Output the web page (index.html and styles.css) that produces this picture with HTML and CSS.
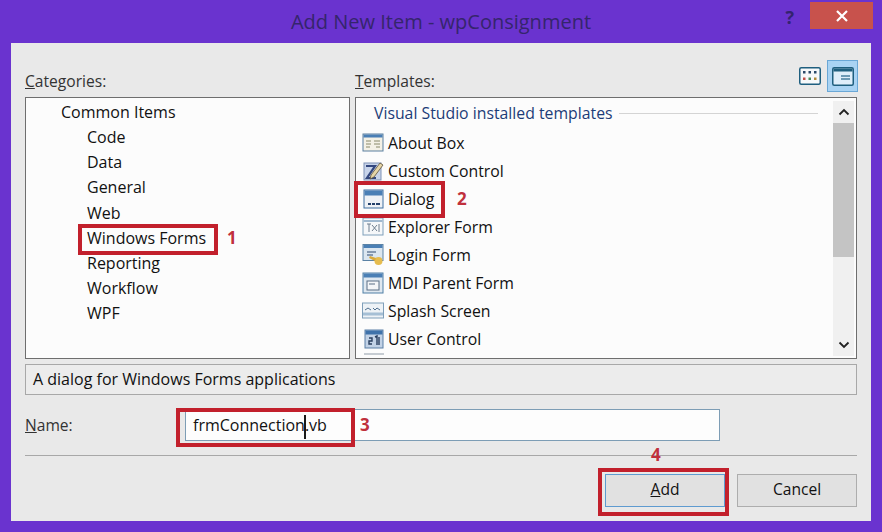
FILE: index.html
```html
<!DOCTYPE html>
<html lang="en">
<head>
    <meta charset="UTF-8">
    <title>Add New Item - wpConsignment</title>
    <link rel="stylesheet" href="styles.css">
</head>
<body>
    <div class="janela">
        <div class="barra-titulo">
            <span class="titulo">Add New Item - wpConsignment</span>
            <span class="ajuda">?</span>
            <span class="fechar">
                <svg width="14" height="14" viewBox="0 0 14 14"><path d="M2 2l10 10M12 2L2 12" stroke="#fff" stroke-width="2.2" fill="none"/></svg>
            </span>
        </div>
        <div class="painel">
            <div class="colunas cabecalho">
                <label class="rotulo"><u>C</u>ategories:</label>
                <div class="cabecalho-templates">
                    <label class="rotulo"><u>T</u>emplates:</label>
                    <div class="visoes">
                        <span class="visao">
                            <svg width="22" height="18" viewBox="0 0 22 18">
                                <rect x="0.75" y="0.75" width="20.5" height="16.5" rx="1.5" fill="#f7f9fa" stroke="#1f5f7f" stroke-width="1.5"/>
                                <rect x="4" y="4" width="2.5" height="2.5" fill="#2b4a6a"/><rect x="9.5" y="4" width="2.5" height="2.5" fill="#2b4a6a"/><rect x="15" y="4" width="2.5" height="2.5" fill="#2b4a6a"/>
                                <rect x="4" y="10.5" width="2.5" height="2.5" fill="#c0504a"/><rect x="9.5" y="10.5" width="2.5" height="2.5" fill="#4a8a5a"/><rect x="15" y="10.5" width="2.5" height="2.5" fill="#b08a3a"/>
                            </svg>
                        </span>
                        <span class="visao ativa">
                            <svg width="22" height="19" viewBox="0 0 22 19">
                                <rect x="0.75" y="0.75" width="20.5" height="17.5" rx="1.5" fill="#dfeefa" stroke="#1f5f7f" stroke-width="1.5"/>
                                <rect x="1.5" y="1.5" width="19" height="3" fill="#1f5f7f"/>
                                <path d="M9 9h9M9 12h9" stroke="#4a7f9f" stroke-width="1.5"/>
                            </svg>
                        </span>
                    </div>
                </div>
            </div>

            <div class="colunas">
                <div class="caixa categorias">
                    <div class="categoria-raiz">Common Items</div>
                    <div class="categoria">Code</div>
                    <div class="categoria">Data</div>
                    <div class="categoria">General</div>
                    <div class="categoria">Web</div>
                    <div class="categoria">Windows Forms</div>
                    <div class="categoria">Reporting</div>
                    <div class="categoria">Workflow</div>
                    <div class="categoria">WPF</div>
                </div>
                <div class="caixa templates">
                    <div class="lista">
                        <div class="grupo"><span>Visual Studio installed templates</span><i></i></div>
                        <div class="item">
                            <svg class="icone" width="22" height="20" viewBox="0 0 22 20">
                                <rect x="1" y="1" width="20" height="17" fill="#f4f1e6" stroke="#5a7f9f"/>
                                <rect x="1.5" y="1.5" width="19" height="3" fill="#4a7fb5"/>
                                <path d="M4 8h5M12 8h6M4 11h5M12 11h6M4 14h4M14 14h4" stroke="#8a8a6a"/>
                            </svg>
                            About Box
                        </div>
                        <div class="item">
                            <svg class="icone" width="22" height="20" viewBox="0 0 22 20">
                                <rect x="2" y="2" width="17" height="17" fill="#c8d4ea" stroke="#7f92b5"/>
                                <path d="M4 5h9L5 17h9" fill="none" stroke="#34487f" stroke-width="2.2"/>
                                <path d="M9 14L18 2l3 2-9 12-4 2z" fill="#e6d6a8" stroke="#5f5238" stroke-width=".8"/>
                            </svg>
                            Custom Control
                        </div>
                        <div class="item">
                            <svg class="icone" width="22" height="20" viewBox="0 0 22 20">
                                <rect x="2" y="1" width="19" height="18" fill="#eef1f5" stroke="#3f6f9f"/>
                                <rect x="2.5" y="1.5" width="18" height="5" fill="#4a7fb5"/>
                                <path d="M6 15h3M10 15h3M14 15h4" stroke="#23406a" stroke-width="2"/>
                            </svg>
                            Dialog
                        </div>
                        <div class="item">
                            <svg class="icone" width="22" height="20" viewBox="0 0 22 20">
                                <rect x="1" y="1" width="20" height="17" fill="#f5f7f9" stroke="#7f9fba"/>
                                <path d="M1.5 4h19" stroke="#9fb8cf" stroke-width="2"/>
                                <path d="M7 7v8M5 7h4M10 8l5 6M15 8l-5 6M17 7v8" stroke="#6f7f8f" fill="none"/>
                            </svg>
                            Explorer Form
                        </div>
                        <div class="item">
                            <svg class="icone" width="22" height="22" viewBox="0 0 22 22">
                                <rect x="1" y="0.5" width="20" height="16" fill="#dbe6f0" stroke="#5a82a5"/>
                                <rect x="1.5" y="1" width="19" height="3" fill="#4a7fb5"/>
                                <path d="M5 8h9M5 11h6" stroke="#6a7f9a" stroke-width="1.6"/>
                                <circle cx="16.5" cy="17" r="4" fill="#e6bc4e"/>
                                <path d="M14 14L8 12l-1 2 6 3" fill="#d8a93c"/>
                            </svg>
                            Login Form
                        </div>
                        <div class="item">
                            <svg class="icone" width="22" height="22" viewBox="0 0 22 22">
                                <rect x="1" y="1" width="20" height="20" fill="#dfe8f0" stroke="#4f7fa5"/>
                                <rect x="1.5" y="1.5" width="19" height="4" fill="#4a7fb5"/>
                                <rect x="5" y="9" width="12" height="9" fill="#f4f6f8" stroke="#5a6f85"/>
                                <path d="M7 12h6" stroke="#5a6f85"/>
                            </svg>
                            MDI Parent Form
                        </div>
                        <div class="item">
                            <svg class="icone" width="22" height="18" viewBox="0 0 22 18">
                                <rect x="0.5" y="1" width="21" height="15" fill="#edf2f6" stroke="#7f9fba"/>
                                <path d="M3 8l3-2 3 2M11 6l2 2 2-2 3 2" stroke="#4f6f8f" fill="none"/>
                                <path d="M1 12h20" stroke="#a5bfd5" stroke-width="3"/>
                            </svg>
                            Splash Screen
                        </div>
                        <div class="item">
                            <svg class="icone" width="22" height="20" viewBox="0 0 22 20">
                                <rect x="3" y="1" width="18" height="18" fill="#c2d2e6" stroke="#5a7fa5"/>
                                <rect x="3.5" y="1.5" width="17" height="4" fill="#3f72aa"/>
                                <path d="M7 9h3v3H7v3h3M13 8l2-1v9M17 8v8" stroke="#2a3f5f" stroke-width="1.4" fill="none"/>
                            </svg>
                            User Control
                        </div>
                        <div class="item-cortado"></div>
                    </div>
                    <div class="rolagem">
                        <span class="seta">
                            <svg width="12" height="8" viewBox="0 0 12 8"><path d="M1.5 6.5L6 2l4.5 4.5" stroke="#222" stroke-width="1.8" fill="none"/></svg>
                        </span>
                        <div class="trilha"><div class="polegar"></div></div>
                        <span class="seta">
                            <svg width="12" height="8" viewBox="0 0 12 8"><path d="M1.5 1.5L6 6l4.5-4.5" stroke="#222" stroke-width="1.8" fill="none"/></svg>
                        </span>
                    </div>
                </div>
            </div>

            <div class="descricao">A dialog for Windows Forms applications</div>

            <div class="linha-nome">
                <label class="rotulo-nome"><u>N</u>ame:</label>
                <div class="campo">frmConnection<span class="cursor"></span>.vb</div>
            </div>

            <div class="separador"></div>

            <div class="botoes">
                <button class="botao padrao"><u>A</u>dd</button>
                <button class="botao">Cancel</button>
            </div>
        </div>

        <div class="marca marca-forms"></div>
        <div class="marca marca-dialog"></div>
        <div class="marca marca-nome"></div>
        <div class="marca marca-add"></div>
        <span class="numero numero-1">1</span>
        <span class="numero numero-2">2</span>
        <span class="numero numero-3">3</span>
        <span class="numero numero-4">4</span>
    </div>
</body>
</html>
```

FILE: styles.css
```css
* {
    box-sizing: border-box;
    margin: 0;
    padding: 0;
    font-family: 'Open Sans', 'Noto Sans', sans-serif;
}

html, body {
    width: 882px;
    height: 532px;
    overflow: hidden;
}

.janela {
    position: relative;
    width: 882px;
    height: 532px;
    background-color: #6a33cf;
    padding: 0 11px 11px 11px;
    display: flex;
    flex-direction: column;
    color: #111;
    font-size: 16px;
}

.barra-titulo {
    position: relative;
    height: 43px;
    flex-shrink: 0;
    display: flex;
    align-items: center;
    justify-content: center;
}

.titulo {
    font-size: 20px;
    color: #35256c;
}

.ajuda {
    position: absolute;
    top: 5px;
    right: 77px;
    font-size: 18px;
    font-weight: bold;
    color: #33236e;
}

.fechar {
    position: absolute;
    top: 2px;
    right: -2px;
    width: 63px;
    height: 27px;
    background-color: #c8524c;
    display: flex;
    align-items: center;
    justify-content: center;
}

.painel {
    flex: 1;
    background-color: #e9e9e9;
    padding: 17px 14px 0 14px;
    display: flex;
    flex-direction: column;
}

.colunas {
    display: grid;
    grid-template-columns: 325px 502px;
    column-gap: 5px;
}

.cabecalho {
    height: 37px;
}

.cabecalho-templates {
    display: flex;
    justify-content: space-between;
}

.rotulo {
    display: block;
    padding-top: 10px;
    font-size: 15.6px;
    color: #333;
}

.visoes {
    display: flex;
    align-items: center;
    gap: 5px;
    height: 32px;
    margin-right: -1px;
}

.visao {
    display: flex;
    align-items: center;
    justify-content: center;
    width: 24px;
    height: 32px;
}

.visao.ativa {
    width: 31px;
    background-color: #a9d3f3;
    border: 1px solid #6aa7d6;
}

.caixa {
    height: 262px;
    background-color: #fcfcfc;
    border: 1px solid #6e6e6e;
}

.categorias {
    padding: 2px 0 0 35px;
}

.categoria-raiz {
    height: 25px;
    line-height: 25px;
}

.categoria {
    height: 25.2px;
    line-height: 25.2px;
    padding-left: 26px;
}

.templates {
    display: flex;
    padding: 2px 2px 2px 0;
}

.lista {
    flex: 1;
    overflow: hidden;
    padding-left: 6px;
    font-size: 15.8px;
}

.grupo {
    height: 26px;
    margin-bottom: 3px;
    display: flex;
    align-items: center;
    gap: 6px;
    padding: 0 15px 0 12px;
    color: #1c3c78;
}

.grupo i {
    flex: 1;
    height: 1px;
    background-color: #d4d4d4;
}

.item {
    height: 28px;
    display: flex;
    align-items: center;
    gap: 4px;
}

.icone {
    flex-shrink: 0;
}

.item-cortado {
    width: 20px;
    height: 2px;
    margin: 0 0 0 2px;
    background-color: #c6ccd2;
}

.rolagem {
    width: 21px;
    margin-top: 1px;
    display: flex;
    flex-direction: column;
    background-color: #f0f0f0;
}

.seta {
    height: 22px;
    display: flex;
    align-items: center;
    justify-content: center;
}

.trilha {
    flex: 1;
}

.polegar {
    height: 134px;
    background-color: #c4c4c4;
}

.descricao {
    margin-top: 5px;
    height: 31px;
    line-height: 28px;
    padding-left: 7px;
    background-color: #ececec;
    border: 1px solid #a8a8a8;
}

.linha-nome {
    margin-top: 14px;
    height: 32px;
    display: flex;
    align-items: center;
}

.rotulo-nome {
    width: 160px;
    font-size: 15.6px;
    color: #333;
}

.campo {
    width: 535px;
    height: 32px;
    line-height: 30px;
    padding-left: 7px;
    background-color: #fdfdfd;
    border: 1px solid #7d9db5;
}

.cursor {
    display: inline-block;
    width: 2px;
    height: 24px;
    margin: 0 -1px;
    vertical-align: middle;
    background-color: #1a1a1a;
}

.separador {
    margin-top: 14px;
    height: 1px;
    background-color: #a8a8a8;
}

.botoes {
    margin-top: 18px;
    display: flex;
    justify-content: flex-end;
    gap: 12px;
}

.botao {
    width: 120px;
    height: 33px;
    padding-bottom: 3px;
    font-size: 15.6px;
    color: #111;
    background-color: #e1e1e1;
    border: 1px solid #adadad;
}

.botao.padrao {
    border-color: #5f9bd0;
}

.marca {
    position: absolute;
    border: 4px solid #c2202c;
}

.marca-forms {
    left: 78px;
    top: 224px;
    width: 140px;
    height: 31px;
}

.marca-dialog {
    left: 354px;
    top: 181px;
    width: 91px;
    height: 37px;
}

.marca-nome {
    left: 176px;
    top: 408px;
    width: 179px;
    height: 39px;
}

.marca-add {
    left: 598px;
    top: 468px;
    width: 131px;
    height: 48px;
}

.numero {
    position: absolute;
    font-size: 17px;
    font-weight: bold;
    line-height: 20px;
    color: #c0303c;
}

.numero-1 {
    left: 227px;
    top: 228px;
}

.numero-2 {
    left: 457px;
    top: 189px;
}

.numero-3 {
    left: 360px;
    top: 415px;
}

.numero-4 {
    left: 651px;
    top: 445px;
}
```
